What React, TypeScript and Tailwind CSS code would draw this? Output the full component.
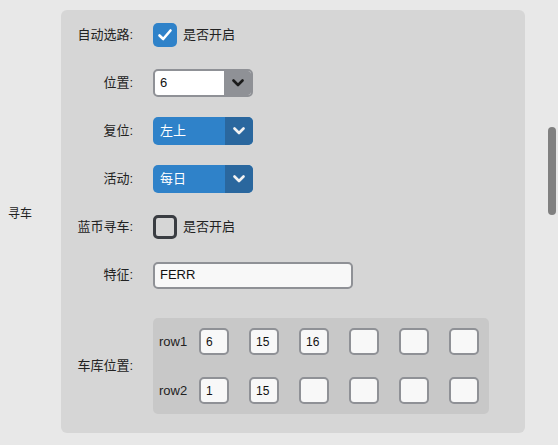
import React from 'react';

const font = { fontFamily: '"Liberation Sans", "Noto Sans CJK SC", sans-serif' };

function Chevron({ color }: { color: string }) {
  return (
    <svg width="12" height="8" viewBox="0 0 12 8" fill="none">
      <path d="M1.5 1.5 L6 6 L10.5 1.5" stroke={color} strokeWidth="2.6" strokeLinecap="round" strokeLinejoin="round" />
    </svg>
  );
}

function Label({ children }: { children: React.ReactNode }) {
  return <div className="w-[72px] shrink-0 text-right text-[13px] text-[#222]">{children}</div>;
}

function BlueSelect({ value }: { value: string }) {
  return (
    <div className="flex h-[28px] w-[100px] overflow-hidden rounded-[5px] bg-[#2f82c9]">
      <div className="flex flex-1 items-center pl-[7px] text-[13px] text-white">{value}</div>
      <div className="flex w-[28px] items-center justify-center bg-[#2a679e]">
        <Chevron color="#f2f2f2" />
      </div>
    </div>
  );
}

function Cell({ value }: { value?: string }) {
  return (
    <div className="flex h-[27px] w-[30px] items-center rounded-[5px] border-2 border-[#8f9196] bg-[#f8f8f8] pl-[5px] text-[12px] text-[#111]">
      {value ?? ''}
    </div>
  );
}

export default function App() {
  const rows: { name: string; cells: string[] }[] = [
    { name: 'row1', cells: ['6', '15', '16', '', '', ''] },
    { name: 'row2', cells: ['1', '15', '', '', '', ''] },
  ];

  return (
    <div className="relative flex h-[445px] w-[558px] bg-[#e8e8e8]" style={font}>
      {/* outer label */}
      <div className="flex w-[61px] shrink-0 items-center pb-[18px] pl-[8px] text-[12px] text-[#222]">寻车</div>

      <div className="mt-[10px] flex h-[423px] w-[464px] flex-col rounded-[6px] bg-[#d6d6d6] pt-[1px]">
        {/* 自动选路 */}
        <div className="flex h-[48px] items-center gap-[20px]">
          <Label>自动选路:</Label>
          <div className="flex items-center gap-[6px]">
            <div className="flex h-[24px] w-[24px] items-center justify-center rounded-[5px] bg-[#2f82c9]">
              <svg width="16" height="14" viewBox="0 0 16 14" fill="none">
                <path d="M2.5 7.5 L6.2 11 L13.5 2.5" stroke="white" strokeWidth="2.6" strokeLinecap="round" strokeLinejoin="round" />
              </svg>
            </div>
            <span className="text-[13px] text-[#222]">是否开启</span>
          </div>
        </div>

        {/* 位置 */}
        <div className="flex h-[48px] items-center gap-[20px]">
          <Label>位置:</Label>
          <div className="flex h-[28px] w-[100px] overflow-hidden rounded-[5px] border-2 border-[#8f9196] bg-white">
            <div className="flex flex-1 items-center pl-[5px] text-[13px] text-[#111]">6</div>
            <div className="flex w-[27px] items-center justify-center bg-[#8f9196]">
              <Chevron color="#1a1a1a" />
            </div>
          </div>
        </div>

        {/* 复位 */}
        <div className="flex h-[48px] items-center gap-[20px]">
          <Label>复位:</Label>
          <BlueSelect value="左上" />
        </div>

        {/* 活动 */}
        <div className="flex h-[48px] items-center gap-[20px]">
          <Label>活动:</Label>
          <BlueSelect value="每日" />
        </div>

        {/* 蓝币寻车 */}
        <div className="flex h-[48px] items-center gap-[20px]">
          <Label>蓝币寻车:</Label>
          <div className="flex items-center gap-[6px]">
            <div className="h-[24px] w-[24px] rounded-[5px] border-[3px] border-[#3a3d42]" />
            <span className="text-[13px] text-[#222]">是否开启</span>
          </div>
        </div>

        {/* 特征 */}
        <div className="flex h-[48px] items-center gap-[20px]">
          <Label>特征:</Label>
          <div className="flex h-[27px] w-[200px] items-center rounded-[5px] border-2 border-[#8f9196] bg-[#f8f8f8] pl-[5px] text-[13px] text-[#111]">
            FERR
          </div>
        </div>

        {/* 车库位置 */}
        <div className="flex items-center gap-[20px] pt-[19px]">
          <Label>车库位置:</Label>
          <div className="flex h-[96px] w-[336px] flex-col justify-center gap-[22px] rounded-[5px] bg-[#c8c8c8] pl-[6px]">
            {rows.map((r) => (
              <div key={r.name} className="flex items-center">
                <div className="w-[40px] text-[13px] text-[#222]">{r.name}</div>
                <div className="flex gap-[20px]">
                  {r.cells.map((c, i) => (
                    <Cell key={i} value={c} />
                  ))}
                </div>
              </div>
            ))}
          </div>
        </div>
      </div>

      {/* overlay scrollbar */}
      <div className="absolute left-[548px] top-[127px] h-[88px] w-[8px] rounded-full bg-[#808080]" />
    </div>
  );
}
